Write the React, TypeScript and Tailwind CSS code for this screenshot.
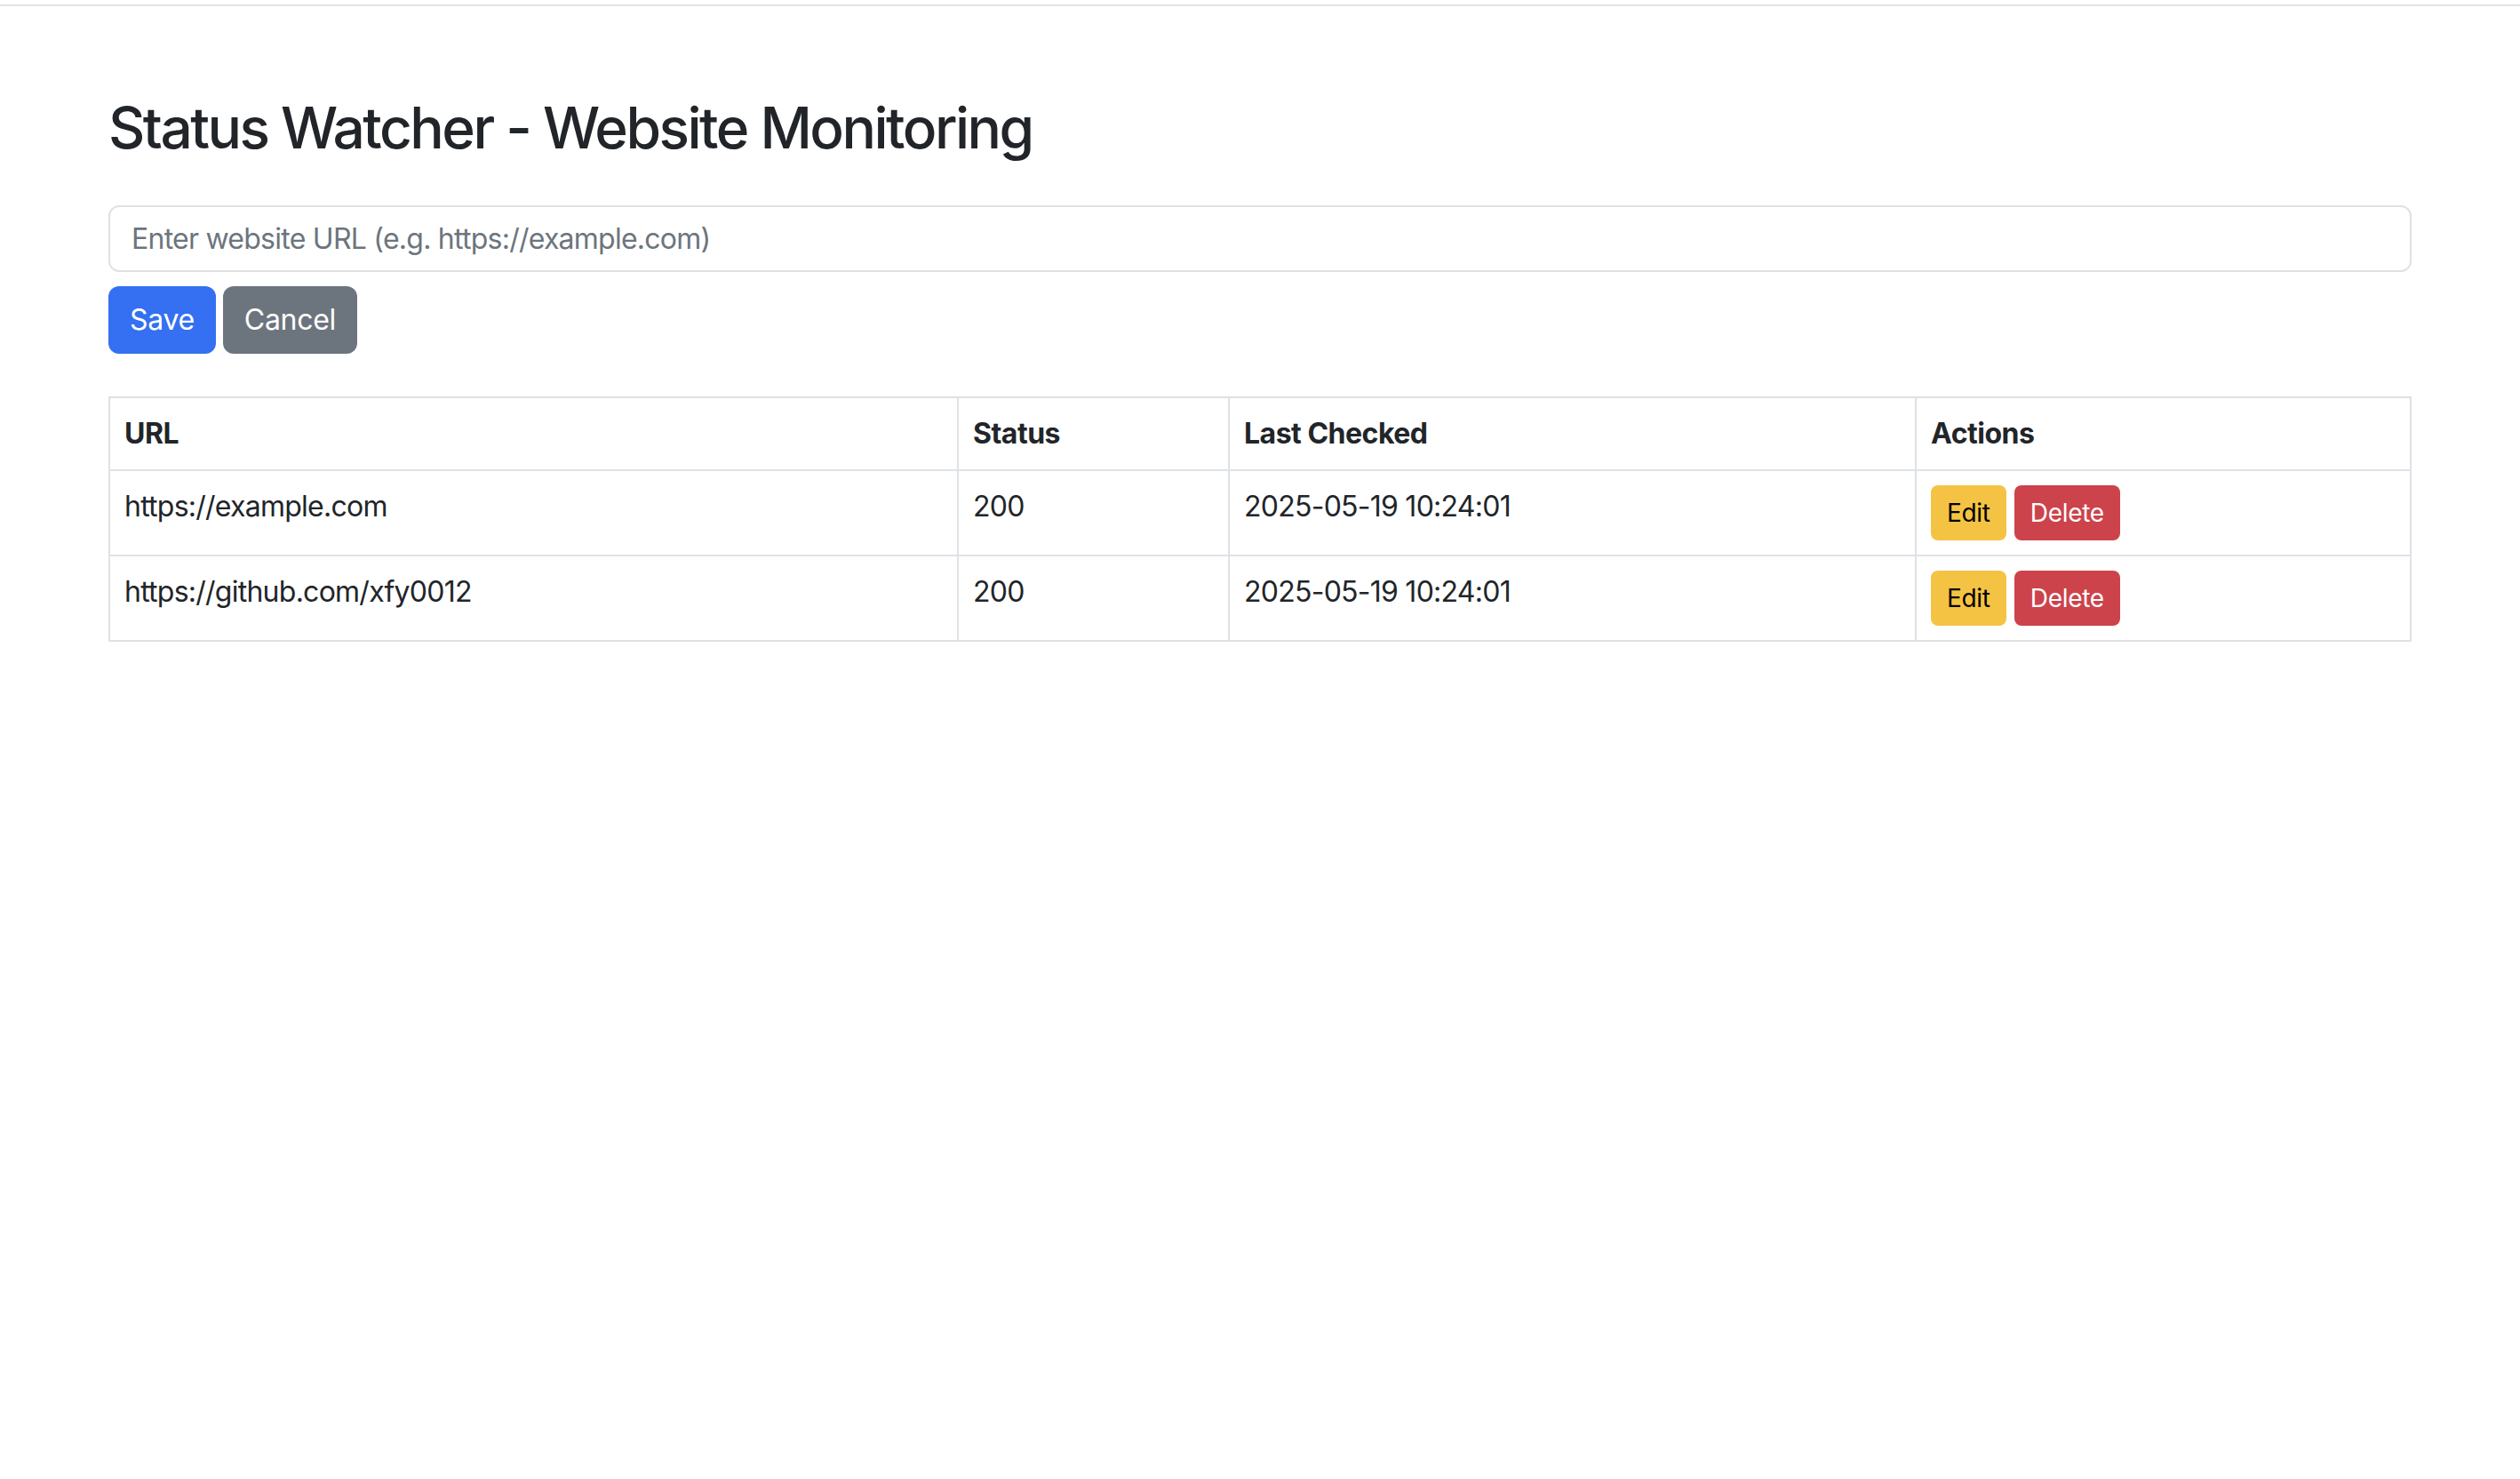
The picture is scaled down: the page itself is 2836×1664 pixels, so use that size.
import React, { useState } from 'react';

interface Site {
  id: number;
  url: string;
  status: number;
  lastChecked: string;
}

const initialSites: Site[] = [
  { id: 1, url: 'https://example.com', status: 200, lastChecked: '2025-05-19 10:24:01' },
  { id: 2, url: 'https://github.com/xfy0012', status: 200, lastChecked: '2025-05-19 10:24:01' },
];

export default function App() {
  const [url, setUrl] = useState('');
  const [sites] = useState<Site[]>(initialSites);

  return (
    <div className="min-h-screen bg-white text-[#212529] font-['Inter','Liberation_Sans',sans-serif]">
      <div className="pt-[5px]">
        <div className="h-[2px] bg-[#e3e3e3]" />
      </div>

      <div className="w-[2640px] mx-auto px-[24px] pt-[99px]">
        <h2 className="text-[64px] leading-[1.2] font-medium tracking-[-2.5px] mb-[48px]">
          Status Watcher - Website Monitoring
        </h2>

        <input
          type="text"
          value={url}
          onChange={(e) => setUrl(e.target.value)}
          placeholder="Enter website URL (e.g. https://example.com)"
          className="block w-full h-[75px] px-[24px] text-[32px] tracking-[-0.75px] border-2 border-[#dee2e6] rounded-[12px] outline-none placeholder-[#6c757d] text-[#212529]"
        />

        <div className="flex gap-[8px] mt-[16px]">
          <button className="h-[76px] px-[24px] text-[32px] tracking-[-0.3px] text-white bg-[#3470f1] rounded-[12px]">
            Save
          </button>
          <button className="h-[76px] px-[24px] text-[32px] tracking-[-0.3px] text-white bg-[#6c757d] rounded-[12px]">
            Cancel
          </button>
        </div>

        <table className="w-full mt-[48px] border-collapse text-[32px] leading-[48px] tracking-[-0.75px] table-fixed">
          <colgroup>
            <col className="w-[955px]" />
            <col className="w-[305px]" />
            <col className="w-[773px]" />
            <col />
          </colgroup>
          <thead>
            <tr>
              <th className="border-2 border-[#dee2e6] p-[16px] text-left font-bold tracking-[-0.5px]">URL</th>
              <th className="border-2 border-[#dee2e6] p-[16px] text-left font-bold tracking-[-0.5px]">Status</th>
              <th className="border-2 border-[#dee2e6] p-[16px] text-left font-bold tracking-[-0.5px]">Last Checked</th>
              <th className="border-2 border-[#dee2e6] p-[16px] text-left font-bold tracking-[-0.5px]">Actions</th>
            </tr>
          </thead>
          <tbody>
            {sites.map((site) => (
              <tr key={site.id}>
                <td className="border-2 border-[#dee2e6] p-[16px] align-top">{site.url}</td>
                <td className="border-2 border-[#dee2e6] p-[16px] align-top">{site.status}</td>
                <td className="border-2 border-[#dee2e6] p-[16px] align-top">{site.lastChecked}</td>
                <td className="border-2 border-[#dee2e6] p-[16px] align-top">
                  <div className="flex gap-[9px]">
                    <button className="h-[62px] px-[18px] text-[28px] tracking-[-0.3px] text-black bg-[#f5c343] rounded-[8px]">
                      Edit
                    </button>
                    <button className="h-[62px] px-[18px] text-[28px] tracking-[-0.3px] text-white bg-[#cc434b] rounded-[8px]">
                      Delete
                    </button>
                  </div>
                </td>
              </tr>
            ))}
          </tbody>
        </table>
      </div>
    </div>
  );
}
